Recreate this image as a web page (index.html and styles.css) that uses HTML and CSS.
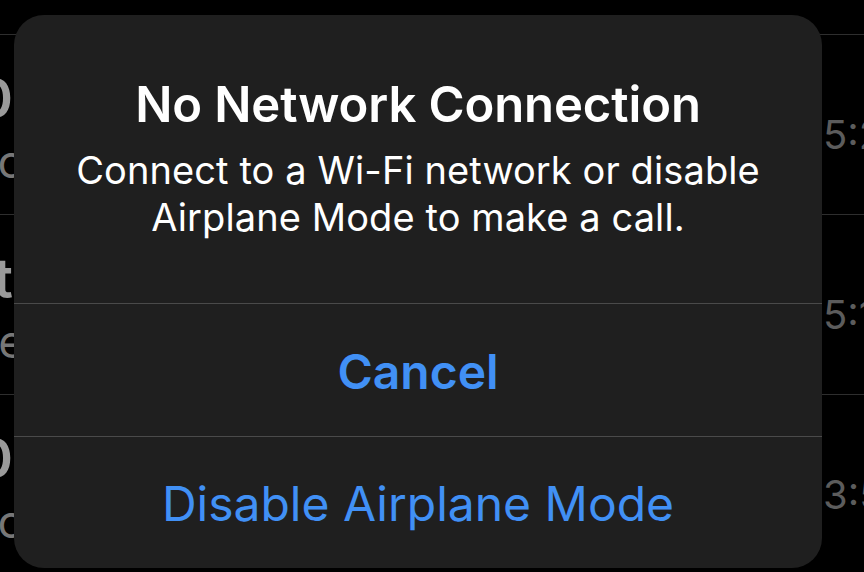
FILE: index.html
```html
<!DOCTYPE html>
<html lang="en">
<head>
  <meta charset="UTF-8">
  <meta name="viewport" content="width=device-width, initial-scale=1.0">
  <title>Recents</title>
  <link rel="stylesheet" href="styles.css">
</head>
<body>
  <div class="recents">
    <div class="call">
      <div class="caller">
        <div class="name">Mom</div>
        <div class="kind">mobile</div>
      </div>
      <div class="time">6:02 PM</div>
    </div>
    <div class="call">
      <div class="caller">
        <div class="name">+1 (415) 555-0170</div>
        <div class="kind">FaceTime Audio</div>
      </div>
      <div class="time">5:24 PM</div>
    </div>
    <div class="call">
      <div class="caller">
        <div class="name">Scott</div>
        <div class="kind">mobile</div>
      </div>
      <div class="time">5:11 PM</div>
    </div>
    <div class="call">
      <div class="caller">
        <div class="name">+1 (650) 555-0140</div>
        <div class="kind">FaceTime Audio</div>
      </div>
      <div class="time">3:52 PM</div>
    </div>
  </div>

  <div class="alert">
    <div class="alert-body">
      <h1 class="alert-title">No Network Connection</h1>
      <p class="alert-message">Connect to a Wi-Fi network or disable<br>Airplane Mode to make a call.</p>
    </div>
    <button class="alert-action cancel">Cancel</button>
    <button class="alert-action">Disable Airplane Mode</button>
  </div>
</body>
</html>
```

FILE: styles.css
```css
:root {
  --backdrop: #000;
  --sheet: #1f1f1f;
  --hairline: #4a4a4a;
  --list-line: #2e2e2e;
  --tint: #4190f5;
}
html, body {
  margin: 0;
  height: 100%;
}
body {
  background: var(--backdrop);
  font-family: Inter, "Noto Sans", sans-serif;
  overflow: hidden;
}

/* the list behind the alert */
.recents {
  margin-top: -145px;
}
.call {
  display: flex;
  height: 180px;
  box-sizing: border-box;
  border-bottom: 1px solid var(--list-line);
}
.caller {
  flex: 0 0 700px;
  min-width: 0;
  margin-left: -687px;
  text-align: right;
  white-space: nowrap;
  padding-top: 33px;
}
.name {
  font-size: 55px;
  line-height: 60px;
  font-weight: 600;
  color: #9a9a9a;
}
.kind {
  font-size: 46px;
  line-height: 54px;
  color: #777;
  margin-top: 6px;
  margin-right: -12px;
}
.time {
  margin-left: auto;
  flex: 0 0 41px;
  min-width: 0;
  padding-top: 77px;
  font-size: 40px;
  line-height: 46px;
  color: #5c5c5c;
  white-space: nowrap;
}

/* alert */
.alert {
  position: absolute;
  left: 14px;
  top: 15px;
  width: 808px;
  height: 553px;
  background: var(--sheet);
  border-radius: 30px;
  display: flex;
  flex-direction: column;
  overflow: hidden;
}
.alert-body {
  padding: 60px 30px 62px;
  text-align: center;
  color: #fff;
}
.alert-title {
  margin: 0;
  font-size: 49px;
  line-height: 60px;
  font-weight: 600;
  letter-spacing: -0.1px;
}
.alert-message {
  margin: 12px 0 0;
  font-size: 38px;
  line-height: 47px;
  letter-spacing: 0.1px;
}
.alert-action {
  flex: 1;
  display: flex;
  align-items: center;
  justify-content: center;
  padding: 3px 0 0;
  background: none;
  border: 0;
  border-top: 1px solid var(--hairline);
  font-family: inherit;
  font-size: 48px;
  color: var(--tint);
}
.alert-action.cancel { font-weight: 600; }
```
